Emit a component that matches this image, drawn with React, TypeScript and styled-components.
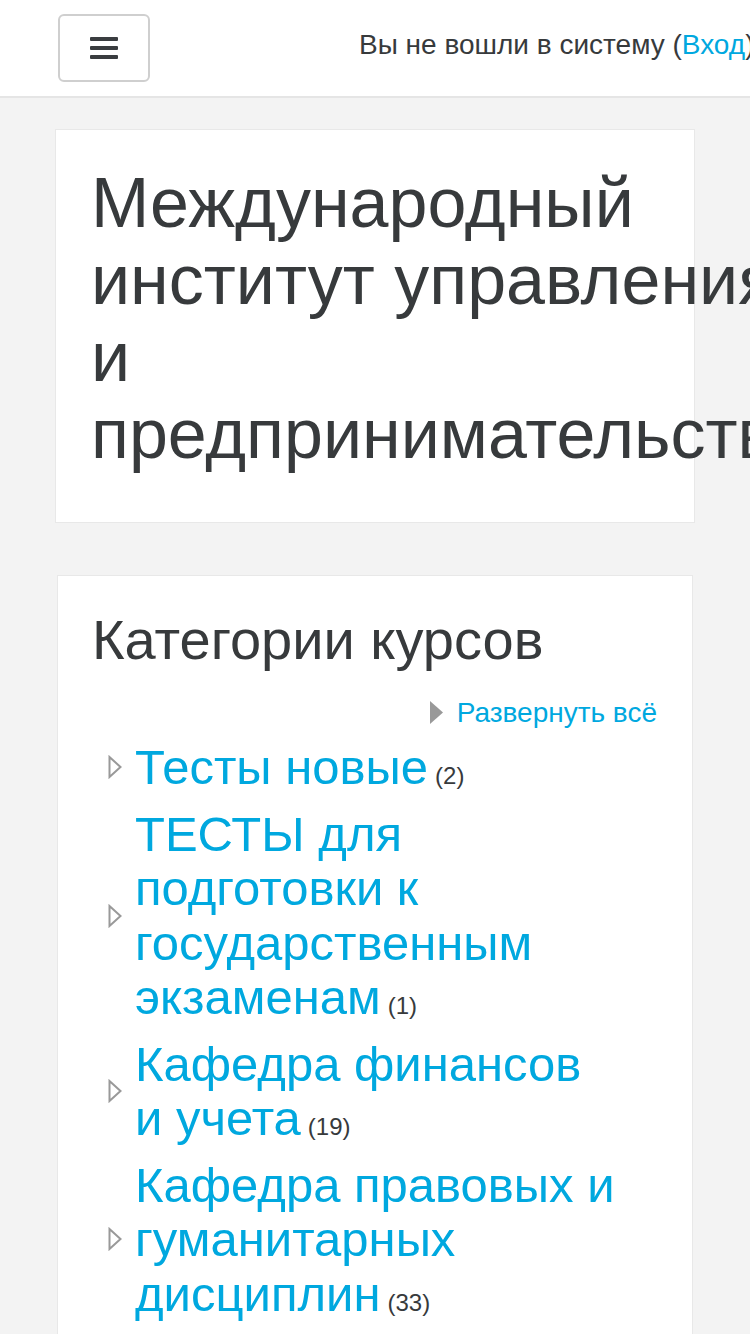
import React from 'react';
import styled, { createGlobalStyle } from 'styled-components';

const GlobalStyle = createGlobalStyle`
  html, body {
    margin: 0;
    padding: 0;
    overflow: hidden;
  }
  body {
    background: #f3f3f3;
    font-family: "Liberation Sans", Arial, sans-serif;
    color: #373a3c;
  }
`;

const Header = styled.header`
  display: flex;
  align-items: center;
  height: 96px;
  padding-left: 58px;
  background: #fff;
  border-bottom: 2px solid #e5e5e5;
`;

const MenuButton = styled.button`
  display: flex;
  align-items: center;
  justify-content: center;
  flex: 0 0 92px;
  box-sizing: border-box;
  height: 68px;
  padding: 0;
  background: #fff;
  border: 2px solid #cfcfcf;
  border-radius: 6px;
`;

const LoginInfo = styled.div`
  margin: 0 0 6px 209px;
  font-size: 28px;
  white-space: nowrap;
  color: #373a3c;
`;

const Link = styled.a`
  color: #00a8df;
  text-decoration: none;
`;

const Main = styled.main`
  padding-top: 31px;
`;

const Card = styled.section<{ $inset: number }>`
  margin: 0 ${(p) => p.$inset}px;
  background: #fff;
  border: 1px solid #e8e8e8;
`;

const TitleCard = styled(Card)`
  padding: 35px 35px 49px;
`;

const SiteTitle = styled.h1`
  width: 720px;
  margin: 0;
  font-size: 70px;
  line-height: 77px;
  font-weight: 400;
  color: #373a3c;
`;

const CategoriesCard = styled(Card)`
  margin-top: 52px;
  padding: 34px 35px 34px 34px;
`;

const CardTitle = styled.h2`
  margin: 0;
  font-size: 56px;
  line-height: 60px;
  font-weight: 400;
  color: #373a3c;
`;

const ExpandAll = styled.div`
  display: flex;
  justify-content: flex-end;
  align-items: center;
  gap: 14px;
  margin-top: 24px;
  font-size: 28px;
  line-height: 37px;
`;

const CategoryList = styled.ul`
  list-style: none;
  margin: 9px 0 0;
  padding: 0 38px 0 16px;
`;

const CategoryItem = styled.li`
  display: flex;
  align-items: center;
  margin-bottom: 12px;
`;

const Toggle = styled.span`
  display: flex;
  flex: 0 0 27px;
`;

const CategoryName = styled.div`
  flex: 1;
  font-size: 49px;
  line-height: 54.5px;
`;

const Count = styled.span`
  margin-left: 7px;
  font-size: 24px;
  line-height: 1;
  color: #373a3c;
`;

const BarsIcon = () => (
  <svg width="28" height="22" viewBox="0 0 28 22">
    <rect x="0" y="0" width="28" height="4" rx="1" fill="#3a3d40" />
    <rect x="0" y="9" width="28" height="4" rx="1" fill="#3a3d40" />
    <rect x="0" y="18" width="28" height="4" rx="1" fill="#3a3d40" />
  </svg>
);

const SolidArrow = () => (
  <svg width="13" height="23" viewBox="0 0 13 23">
    <polygon points="0,0 13,11.5 0,23" fill="#999" />
  </svg>
);

const OutlineArrow = () => (
  <svg width="14" height="24" viewBox="0 0 14 24">
    <polygon points="1.5,2 12.5,12 1.5,22" fill="none" stroke="#999" strokeWidth="2" />
  </svg>
);

const categories = [
  { name: 'Тесты новые', count: 2 },
  { name: 'ТЕСТЫ для подготовки к государственным экзаменам', count: 1 },
  { name: 'Кафедра финансов и учета', count: 19 },
  { name: 'Кафедра правовых и гуманитарных дисциплин', count: 33 },
  { name: 'Кафедра экономики и менеджмента', count: 21 },
];

const App: React.FC = () => (
  <>
    <GlobalStyle />
    <Header>
      <MenuButton aria-label="Меню">
        <BarsIcon />
      </MenuButton>
      <LoginInfo>
        Вы не вошли в систему (<Link href="#">Вход</Link>)
      </LoginInfo>
    </Header>
    <Main>
      <TitleCard $inset={55}>
        <SiteTitle>Международный институт управления и предпринимательства</SiteTitle>
      </TitleCard>
      <CategoriesCard $inset={57}>
        <CardTitle>Категории курсов</CardTitle>
        <ExpandAll>
          <SolidArrow />
          <Link href="#">Развернуть всё</Link>
        </ExpandAll>
        <CategoryList>
          {categories.map((c) => (
            <CategoryItem key={c.name}>
              <Toggle>
                <OutlineArrow />
              </Toggle>
              <CategoryName>
                <Link href="#">{c.name}</Link>
                <Count>({c.count})</Count>
              </CategoryName>
            </CategoryItem>
          ))}
        </CategoryList>
      </CategoriesCard>
    </Main>
  </>
);

export default App;
